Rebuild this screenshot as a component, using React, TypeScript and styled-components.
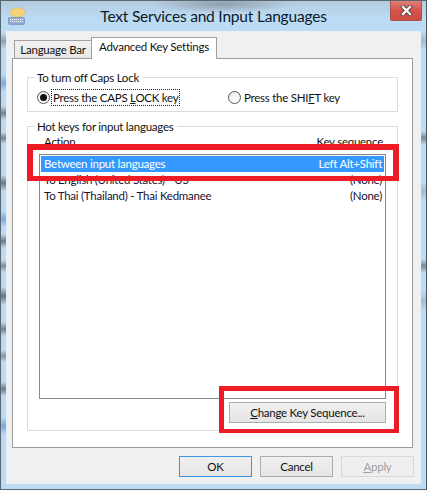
import React, { FC } from 'react';
import styled, { createGlobalStyle } from 'styled-components';

const uiFont = 'Lato, "Open Sans", "Liberation Sans", sans-serif';

const blur = (color: string, y: number, r: number) =>
  `transparent ${y - r}px, ${color} ${y}px, transparent ${y + r}px`;

// blurred desktop showing through the glass frame
const leftGlass = [
  blur('#8e9db0', 40, 8),
  blur('#7fa6e0', 82, 9),
  blur('#76808c', 112, 7),
  blur('#76808c', 137, 6),
  blur('#6a7480', 182, 8),
  blur('#7fa6e0', 218, 8),
  blur('#6f7986', 240, 7),
  blur('#808a96', 265, 6),
  blur('#6a7480', 295, 9),
  blur('#76808c', 328, 7),
  blur('#8a94a0', 355, 6),
  blur('#6f7986', 388, 7),
  blur('#7fa6e0', 425, 9),
].join(', ');

const rightGlass = [
  blur('#a8bccd', 40, 10),
  blur('#7d8894', 137, 7),
  blur('#a8bccd', 190, 10),
  blur('#7d8894', 265, 7),
  blur('#a8bccd', 300, 10),
].join(', ');

const GlobalStyle = createGlobalStyle`
  html, body {
    margin: 0;
    padding: 0;
    background: #fff;
  }
  * {
    box-sizing: border-box;
  }
`;

const Window = styled.div`
  position: relative;
  width: 427px;
  height: 490px;
  display: flex;
  flex-direction: column;
  border: 1px solid #5a6670;
  border-right-color: #4a5660;
  background:
    linear-gradient(180deg, ${leftGlass}) left top / 5px 100% no-repeat,
    linear-gradient(180deg, ${rightGlass}) right top / 5px 100% no-repeat,
    radial-gradient(70px 9px at 220px 3px, #8fa0ae, transparent),
    linear-gradient(180deg, #b4cbdd 0, #bcdcf6 18px, #bcdcf6 100%);
  font-family: ${uiFont};
  font-size: 11.5px;
  letter-spacing: -0.25px;
  color: #111;
  overflow: hidden;
`;

const TitleBar = styled.div`
  height: 30px;
  flex: none;
  display: grid;
  grid-template-columns: 1fr auto 1fr;
  align-items: start;
`;

const TitleIcon = styled.svg`
  width: 18px;
  height: 18px;
  margin: 6px 0 0 7px;
`;

const TitleText = styled.div`
  font-size: 15.5px;
  letter-spacing: -0.2px;
  line-height: 30px;
  color: #0c1a26;
`;

const CloseButton = styled.div`
  justify-self: end;
  width: 32px;
  height: 20px;
  margin-right: 4px;
  display: flex;
  align-items: center;
  justify-content: center;
  background: linear-gradient(180deg, #e08078 0, #d4534b 50%, #cf4b44 100%);
  border: 1px solid #a8534f;
  border-top: none;
  border-radius: 0 0 2px 2px;
`;

const Client = styled.div`
  flex: 1;
  margin: 0 5px 5px;
  padding: 5px 7px 6px 5px;
  background: #f0f0f0;
  border: 1px solid #e8eef3;
  display: flex;
  flex-direction: column;
`;

const TabStrip = styled.div`
  height: 21px;
  flex: none;
  display: flex;
  align-items: flex-end;
  padding-left: 2px;
  position: relative;
  z-index: 1;
`;

const Tab = styled.div<{ $active?: boolean }>`
  height: ${(p) => (p.$active ? '22px' : '18px')};
  width: ${(p) => (p.$active ? '126px' : '77px')};
  margin-bottom: ${(p) => (p.$active ? '-1px' : '0')};
  border: 1px solid #a0a0a0;
  border-right-width: ${(p) => (p.$active ? '1px' : '0')};
  border-bottom: none;
  background: ${(p) => (p.$active ? '#fff' : 'linear-gradient(180deg, #f2f2f2, #e6e6e6)')};
  line-height: ${(p) => (p.$active ? '18px' : '17px')};
  text-align: center;
  white-space: nowrap;
`;

const TabPanel = styled.div`
  flex: 1;
  background: #fff;
  border: 1px solid #9c9c9c;
  padding: 18px 14px 16px 14px;
  display: flex;
  flex-direction: column;
  gap: 14px;
`;

const Group = styled.div<{ $grow?: boolean }>`
  position: relative;
  border: 1px solid #dcdcdc;
  flex: ${(p) => (p.$grow ? '1' : 'none')};
  height: ${(p) => (p.$grow ? 'auto' : '35px')};
  display: flex;
  flex-direction: column;
`;

const Legend = styled.div`
  position: absolute;
  top: -8px;
  left: 7px;
  padding: 0 3px 0 2px;
  background: #fff;
  line-height: 15px;
  white-space: nowrap;
`;

const RadioRow = styled.div`
  display: flex;
  align-items: center;
  height: 17px;
  margin-top: 11px;
  padding-left: 9px;
`;

const RadioOption = styled.div<{ $width: number }>`
  width: ${(p) => p.$width}px;
  display: flex;
  align-items: center;
  flex: none;
`;

const RadioCircle = styled.span<{ $checked?: boolean }>`
  width: 13px;
  height: 13px;
  border-radius: 50%;
  border: 1px solid #555;
  background: linear-gradient(180deg, #eee, #fff);
  flex: none;
  display: flex;
  align-items: center;
  justify-content: center;
  &::after {
    content: '';
    display: ${(p) => (p.$checked ? 'block' : 'none')};
    width: 7px;
    height: 7px;
    border-radius: 50%;
    background: #111;
  }
`;

const RadioLabel = styled.span<{ $focused?: boolean }>`
  margin-left: 2px;
  padding: 0 1px;
  line-height: 15px;
  white-space: nowrap;
  outline: ${(p) => (p.$focused ? '1px dotted #222' : 'none')};
`;

const ListHeader = styled.div`
  display: flex;
  justify-content: space-between;
  padding: 7px 14px 0 16px;
  height: 27px;
  line-height: 15px;
  flex: none;
`;

const ListBox = styled.div`
  margin: 0 11px 31px 11px;
  flex: 1;
  border: 1px solid #828790;
  padding: 1px;
`;

const Row = styled.div<{ $selected?: boolean }>`
  height: 16px;
  display: flex;
  justify-content: space-between;
  padding: 0 2px 0 3px;
  line-height: 15px;
  background: ${(p) => (p.$selected ? '#3399ff' : 'transparent')};
  color: ${(p) => (p.$selected ? '#fff' : '#1a1030')};
`;

const Button = styled.div<{ $focused?: boolean; $disabled?: boolean }>`
  width: 73px;
  height: 21px;
  flex: none;
  display: flex;
  align-items: center;
  justify-content: center;
  white-space: nowrap;
  border: 1px solid ${(p) => (p.$focused ? '#3d95e6' : p.$disabled ? '#d9d9d9' : '#acacac')};
  background: ${(p) =>
    p.$disabled ? '#efefef' : 'linear-gradient(180deg, #f0f0f0, #e5e5e5)'};
  color: ${(p) => (p.$disabled ? '#a0a0a0' : '#111')};
`;

const ChangeButton = styled(Button)`
  position: absolute;
  right: 11px;
  bottom: 7px;
  width: 157px;
`;

const Footer = styled.div`
  flex: none;
  display: flex;
  justify-content: flex-end;
  gap: 8px;
  margin-top: 8px;
  margin-right: -1px;
`;

// the red marks someone drew over the screenshot
const Highlight = styled.div<{ $l: number; $t: number; $w: number; $h: number; $b: string }>`
  position: absolute;
  left: ${(p) => p.$l}px;
  top: ${(p) => p.$t}px;
  width: ${(p) => p.$w}px;
  height: ${(p) => p.$h}px;
  border-style: solid;
  border-color: #ed1c24;
  border-width: ${(p) => p.$b};
  pointer-events: none;
`;

const App: FC = () => (
  <>
    <GlobalStyle />
    <Window>
      <TitleBar>
        <TitleIcon viewBox="0 0 18 18">
          <ellipse cx="9.5" cy="5.5" rx="7.5" ry="4.5" fill="#f6d27a" stroke="#e0b650" strokeWidth="0.6" />
          <path d="M6 9l-1 3 4.5-2.5z" fill="#f6d27a" />
          <rect x="0.5" y="10.5" width="16" height="7" rx="1" fill="#8fa9cf" stroke="#7590b8" strokeWidth="0.7" />
          <path d="M2 12.5h13M2 14.5h13" stroke="#eef5fb" strokeWidth="1" strokeDasharray="1.4 0.6" />
        </TitleIcon>
        <TitleText>Text Services and Input Languages</TitleText>
        <CloseButton>
          <svg width="13" height="11" viewBox="0 0 13 11">
            <path d="M3 2l7 7M10 2l-7 7" stroke="#4a3a3a" strokeWidth="4" strokeLinecap="square" />
            <path d="M3 2l7 7M10 2l-7 7" stroke="#fff" strokeWidth="2.4" strokeLinecap="square" />
          </svg>
        </CloseButton>
      </TitleBar>
      <Client>
        <TabStrip>
          <Tab>Language Bar</Tab>
          <Tab $active>Advanced Key Settings</Tab>
        </TabStrip>
        <TabPanel>
          <Group>
            <Legend>To turn off Caps Lock</Legend>
            <RadioRow>
              <RadioOption $width={191}>
                <RadioCircle $checked />
                <RadioLabel $focused>
                  Press the CAPS <u>L</u>OCK key
                </RadioLabel>
              </RadioOption>
              <RadioOption $width={170}>
                <RadioCircle />
                <RadioLabel>
                  Press the SHI<u>F</u>T key
                </RadioLabel>
              </RadioOption>
            </RadioRow>
          </Group>
          <Group $grow>
            <Legend>Hot keys for input languages</Legend>
            <ListHeader>
              <span>Action</span>
              <span>Key sequence</span>
            </ListHeader>
            <ListBox>
              <Row $selected>
                <span>Between input languages</span>
                <span>Left Alt+Shift</span>
              </Row>
              <Row>
                <span>To English (United States) - US</span>
                <span>(None)</span>
              </Row>
              <Row>
                <span>To Thai (Thailand) - Thai Kedmanee</span>
                <span>(None)</span>
              </Row>
            </ListBox>
            <ChangeButton>
              <span>
                <u>C</u>hange Key Sequence...
              </span>
            </ChangeButton>
          </Group>
        </TabPanel>
        <Footer>
          <Button $focused>OK</Button>
          <Button>Cancel</Button>
          <Button $disabled>
            <span>
              <u>A</u>pply
            </span>
          </Button>
        </Footer>
      </Client>
      <Highlight $l={26} $t={143} $w={372} $h={37} $b="6px 6px 5px" />
      <Highlight $l={218} $t={385} $w={180} $h={47} $b="5px 5px 4px" />
    </Window>
  </>
);

export default App;
